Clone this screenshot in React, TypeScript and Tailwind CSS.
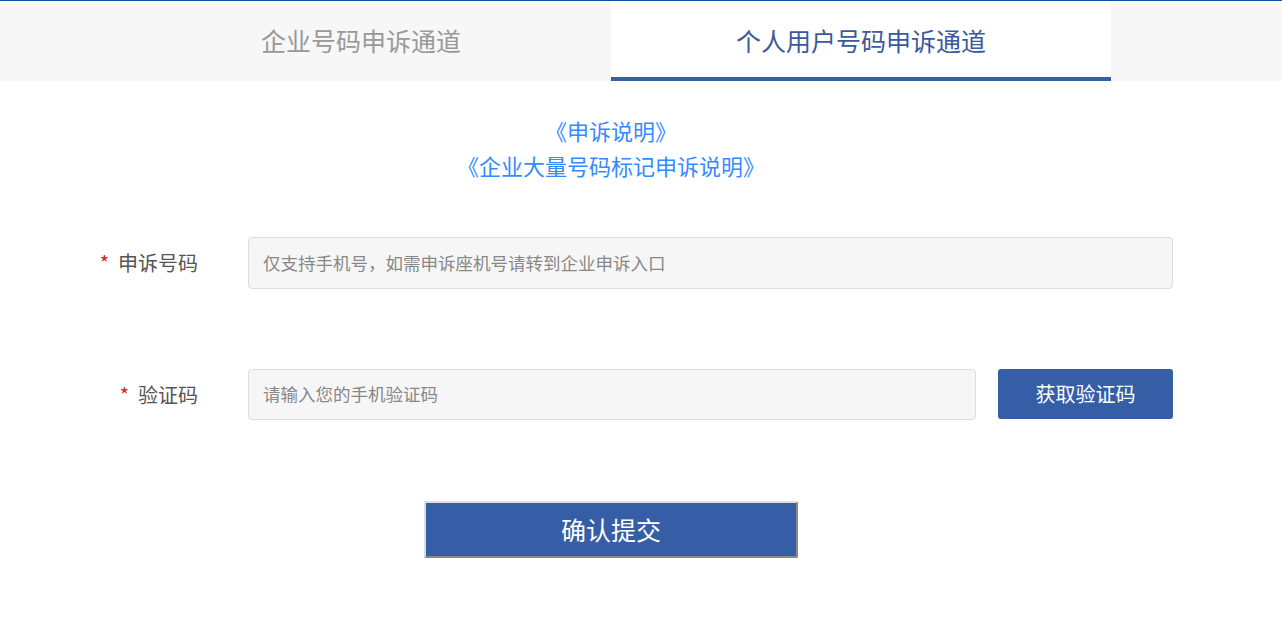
import React from "react";

export default function App() {
  const font = { fontFamily: '"Noto Sans CJK SC", "Noto Sans", sans-serif' };
  return (
    <div className="min-h-screen w-full bg-white" style={font}>
      <div className="border-t border-[#0a52a3] bg-[#f7f7f7]">
        <div className="flex w-[1222px] justify-center">
          <div className="flex h-[80px] w-[500px] items-center justify-center text-[25px] text-[#999999]">
            企业号码申诉通道
          </div>
          <div className="flex h-[80px] w-[500px] items-center justify-center border-b-4 border-[#3560a8] bg-white pt-[4px] text-[25px] text-[#3a5a9c]">
            个人用户号码申诉通道
          </div>
        </div>
      </div>

      <div className="w-[1222px]">
        <div className="mt-[32px] flex flex-col items-center text-[22px] leading-[35px] text-[#338bff]">
          <a>《申诉说明》</a>
          <a>《企业大量号码标记申诉说明》</a>
        </div>

        <div className="mt-[54px] pl-[61px]">
          <div className="flex items-center">
            <label className="w-[187px] shrink-0 whitespace-nowrap pr-[50px] text-right text-[20px] text-[#555555]">
              <span className="mr-[9px] text-[#e02020]">*</span>申诉号码
            </label>
            <div className="flex h-[52px] w-[925px] shrink-0 items-center rounded-[4px] border border-[#dcdcdc] bg-[#f6f6f6] pl-[14px] text-[17.5px] text-[#888888]">
              仅支持手机号，如需申诉座机号请转到企业申诉入口
            </div>
          </div>

          <div className="mt-[80px] flex items-center">
            <label className="w-[187px] shrink-0 whitespace-nowrap pr-[50px] text-right text-[20px] text-[#555555]">
              <span className="mr-[9px] text-[#e02020]">*</span>验证码
            </label>
            <div className="flex h-[51px] w-[728px] shrink-0 items-center rounded-[4px] border border-[#dcdcdc] bg-[#f6f6f6] pl-[14px] text-[17.5px] text-[#888888]">
              请输入您的手机验证码
            </div>
            <button className="ml-[22px] flex h-[50px] w-[175px] shrink-0 items-center justify-center self-start rounded-[3px] bg-[#355ea6] text-[20px] text-white">
              获取验证码
            </button>
          </div>
        </div>

        <div className="mt-[81px] flex justify-center">
          <button className="flex h-[57px] w-[374px] items-center justify-center rounded-[2px] border-2 border-t-[#dedede] border-l-[#dedede] border-r-[#8a8a8a] border-b-[#8a8a8a] bg-[#355ea6] text-[25px] text-white">
            确认提交
          </button>
        </div>
      </div>
    </div>
  );
}
